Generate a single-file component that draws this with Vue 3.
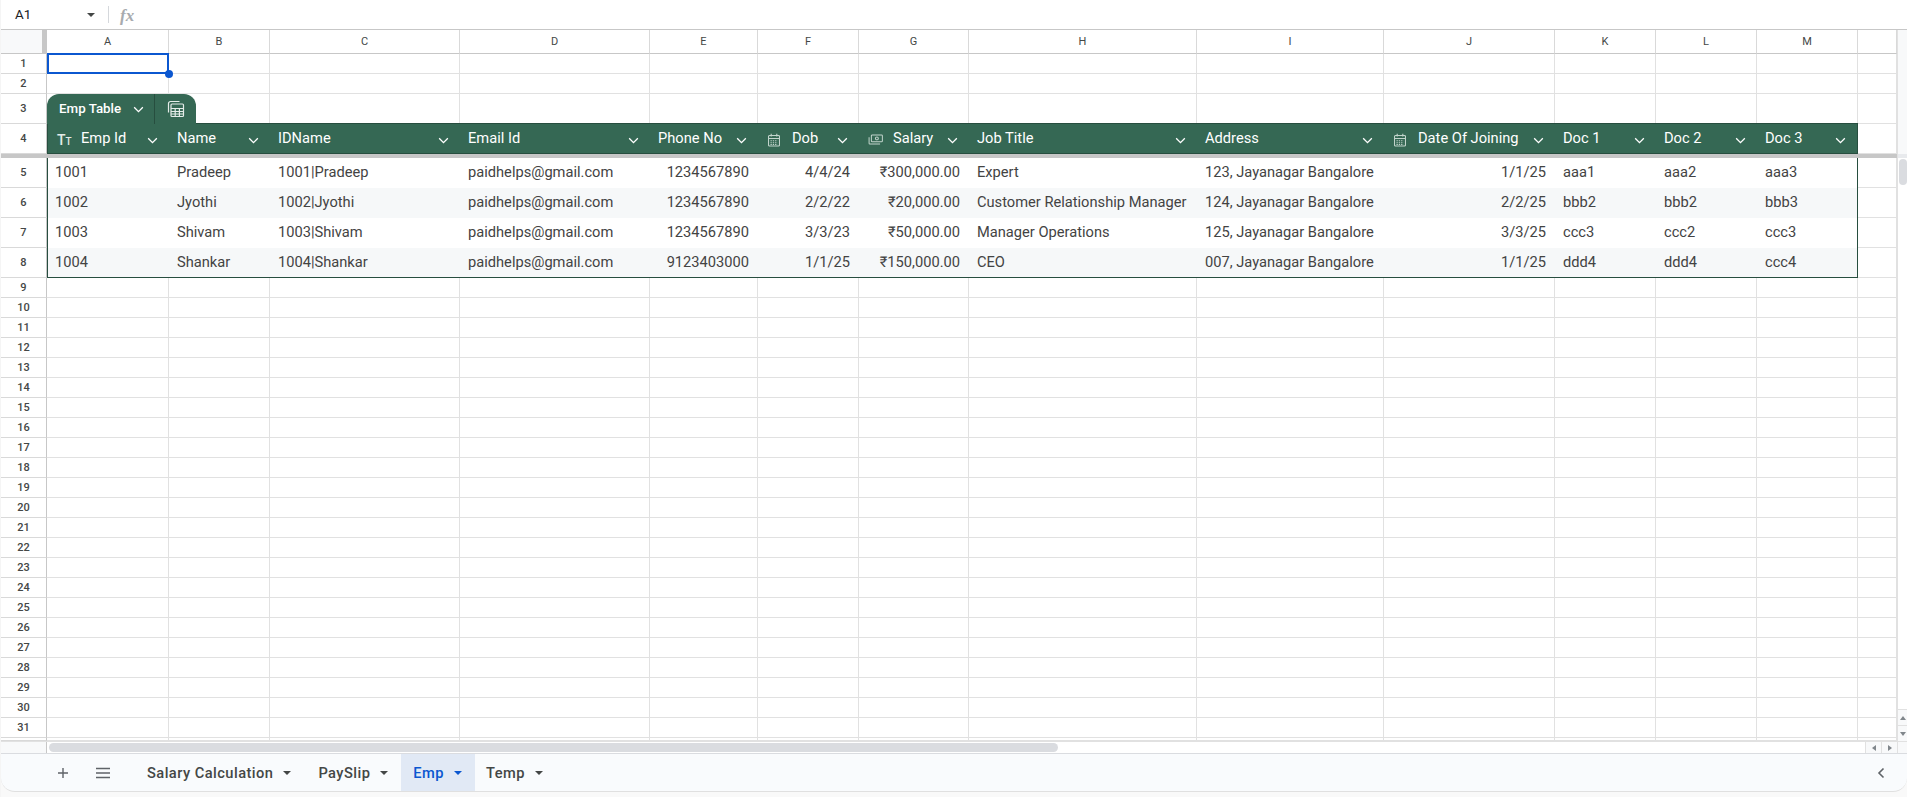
<script setup>
const columns = ['A', 'B', 'C', 'D', 'E', 'F', 'G', 'H', 'I', 'J', 'K', 'L', 'M', '']

const headers = [
  { label: 'Emp Id', icon: 'text' },
  { label: 'Name' },
  { label: 'IDName' },
  { label: 'Email Id' },
  { label: 'Phone No' },
  { label: 'Dob', icon: 'date' },
  { label: 'Salary', icon: 'money' },
  { label: 'Job Title' },
  { label: 'Address' },
  { label: 'Date Of Joining', icon: 'date' },
  { label: 'Doc 1' },
  { label: 'Doc 2' },
  { label: 'Doc 3' },
]

// which columns are right aligned
const rightCols = [4, 5, 6, 9]

const rows = [
  ['1001', 'Pradeep', '1001|Pradeep', 'paidhelps@gmail.com', '1234567890', '4/4/24', '₹300,000.00', 'Expert', '123, Jayanagar Bangalore', '1/1/25', 'aaa1', 'aaa2', 'aaa3'],
  ['1002', 'Jyothi', '1002|Jyothi', 'paidhelps@gmail.com', '1234567890', '2/2/22', '₹20,000.00', 'Customer Relationship Manager', '124, Jayanagar Bangalore', '2/2/25', 'bbb2', 'bbb2', 'bbb3'],
  ['1003', 'Shivam', '1003|Shivam', 'paidhelps@gmail.com', '1234567890', '3/3/23', '₹50,000.00', 'Manager Operations', '125, Jayanagar Bangalore', '3/3/25', 'ccc3', 'ccc2', 'ccc3'],
  ['1004', 'Shankar', '1004|Shankar', 'paidhelps@gmail.com', '9123403000', '1/1/25', '₹150,000.00', 'CEO', '007, Jayanagar Bangalore', '1/1/25', 'ddd4', 'ddd4', 'ccc4'],
]

// empty rows below the table
const emptyRows = []
for (let i = 9; i <= 31; i++) emptyRows.push(i)

const tabs = [
  { name: 'Salary Calculation' },
  { name: 'PaySlip' },
  { name: 'Emp', active: true },
  { name: 'Temp' },
]
</script>

<template>
  <div class="page">
    <!-- formula bar -->
    <div class="formula-bar">
      <span class="name-box">A1</span>
      <span class="caret"></span>
      <span class="bar-sep"></span>
      <span class="fx">fx</span>
    </div>

    <div class="sheet">
      <div class="sheet-main">
        <!-- column letters -->
        <div class="row col-head">
          <div class="corner"></div>
          <div v-for="c in columns" :key="c" class="letter">{{ c }}</div>
        </div>

        <!-- rows 1 and 2 -->
        <div class="row r20">
          <div class="num">1</div>
          <div v-for="c in columns" :key="c" class="cell">
            <div v-if="c === 'A'" class="selected"><span class="handle"></span></div>
          </div>
        </div>
        <div class="row r20">
          <div class="num">2</div>
          <div v-for="c in columns" :key="c" class="cell"></div>
        </div>

        <!-- row 3 holds the table name tab -->
        <div class="row r30">
          <div class="num">3</div>
          <div v-for="c in columns" :key="c" class="cell">
            <div v-if="c === 'A'" class="table-tab">
              <span class="tab-name">Emp Table</span>
              <svg class="chev" viewBox="0 0 12 12"><path d="M2 4l4 4 4-4" /></svg>
              <span class="tab-sep"></span>
              <svg class="tab-icon" viewBox="0 0 18 18">
                <path d="M1.5 12.5V3.5a2 2 0 0 1 2-2h9" />
                <rect x="4" y="4" width="12.5" height="12.5" rx="1" />
                <path d="M4 8.5h12.5M4 11.5h12.5M4 14h12.5M8.2 8.5v8M12.4 8.5v8" />
              </svg>
            </div>
          </div>
        </div>

        <!-- table header, row 4 -->
        <div class="row r30 head-row">
          <div class="num">4</div>
          <div v-for="h in headers" :key="h.label" class="th">
            <span v-if="h.icon === 'text'" class="tt">T<small>T</small></span>
            <svg v-if="h.icon === 'date'" class="th-icon" viewBox="0 0 12 14">
              <path d="M1.5 2.5h9a1 1 0 0 1 1 1v8.5a1 1 0 0 1-1 1h-9a1 1 0 0 1-1-1V3.5a1 1 0 0 1 1-1zM.5 5.5h11M3.2 .8v2.6M8.8 .8v2.6" />
              <path d="M2.5 7.7h7M2.5 9.7h7M2.5 11.5h7" stroke-dasharray="1.3 1" />
            </svg>
            <svg v-if="h.icon === 'money'" class="th-icon money" viewBox="0 0 16 12">
              <rect x="3.5" y="1" width="12" height="7.5" rx="1" />
              <path d="M1 3.5v6.5a.8.8 0 0 0 .8.8H13" />
              <circle cx="9.5" cy="4.8" r="1.6" />
            </svg>
            <span class="th-label">{{ h.label }}</span>
            <svg class="chev low" viewBox="0 0 12 12"><path d="M2 4l4 4 4-4" /></svg>
          </div>
          <div class="cell"></div>
        </div>

        <div class="freeze"></div>

        <!-- table body -->
        <div v-for="(r, i) in rows" :key="i" class="row r30" :class="{ 'last-row': i === rows.length - 1 }">
          <div class="num">{{ i + 5 }}</div>
          <div
            v-for="(v, j) in r"
            :key="j"
            class="td"
            :class="{ right: rightCols.includes(j), alt: i % 2 === 1, first: j === 0, end: j === r.length - 1 }"
          >{{ v }}</div>
          <div class="cell"></div>
        </div>

        <!-- the rest of the grid -->
        <div v-for="n in emptyRows" :key="n" class="row r20">
          <div class="num">{{ n }}</div>
          <div v-for="c in columns" :key="c" class="cell"></div>
        </div>
        <div class="row stub">
          <div class="num"></div>
          <div v-for="c in columns" :key="c" class="cell"></div>
        </div>

        <!-- horizontal scrollbar -->
        <div class="hscroll">
          <div class="hscroll-corner"></div>
          <div class="hscroll-track"><div class="hscroll-thumb"></div></div>
          <div class="arrow-btn"><span class="tri tri-left"></span></div>
          <div class="arrow-btn"><span class="tri tri-right"></span></div>
        </div>
      </div>

      <!-- vertical scrollbar -->
      <div class="vscroll">
        <div class="vscroll-top"></div>
        <div class="vscroll-band"></div>
        <div class="vscroll-track"><div class="vscroll-thumb"></div></div>
        <div class="arrow-btn v"><span class="tri tri-up"></span></div>
        <div class="arrow-btn v"><span class="tri tri-down"></span></div>
        <div class="vscroll-end"></div>
      </div>
    </div>

    <!-- sheet tabs -->
    <div class="tabbar">
      <svg class="bar-icon plus" viewBox="0 0 10 10"><path d="M5 0v10M0 5h10" /></svg>
      <svg class="bar-icon menu" viewBox="0 0 14 12"><path d="M0 1.5h14M0 6h14M0 10.5h14" /></svg>
      <div class="tabs">
        <div v-for="t in tabs" :key="t.name" class="tab" :class="{ active: t.active }">
          <span>{{ t.name }}</span>
          <span class="tab-caret"></span>
        </div>
      </div>
      <svg class="collapse" viewBox="0 0 10 12"><path d="M7.5 1.5L3 6l4.5 4.5" /></svg>
    </div>
  </div>
</template>

<style>
html, body {
  margin: 0;
  background: #f9f9f9;
}
</style>

<style scoped>
.page {
  width: 1907px;
  height: 797px;
  box-sizing: border-box;
  border-left: 1px solid #f5f5f5;
  overflow: hidden;
  font-family: Roboto, "Liberation Sans", sans-serif;
  display: flex;
  flex-direction: column;
  background: #f9f9f9;
}

.formula-bar {
  height: 30px;
  flex: none;
  box-sizing: border-box;
  background: #fff;
  border-bottom: 1px solid #c7c7c7;
  display: flex;
  align-items: center;
  padding-left: 14px;
}
.name-box {
  width: 72px;
  font-size: 13.33px;
  color: #202124;
}
.caret {
  border-left: 4px solid transparent;
  border-right: 4px solid transparent;
  border-top: 4px solid #444746;
}
.bar-sep {
  width: 1px;
  height: 17px;
  background: #d5d8dc;
  margin: 0 11px 0 13px;
}
.fx {
  font-family: "Liberation Serif", serif;
  font-style: italic;
  font-weight: 700;
  font-size: 17px;
  color: #a8abaf;
  padding-top: 2px;
}

.sheet {
  display: flex;
  height: 723px;
  flex: none;
  background: #fff;
  border-bottom: 1px solid #dadce0;
}
.sheet-main {
  width: 1896px;
  flex: none;
}

.row {
  display: grid;
  grid-template-columns: 46px 122px 101px 190px 190px 108px 101px 110px 228px 187px 171px 101px 101px 101px 39px;
}
.r20 { height: 20px; }
.r30 { height: 30px; }
.col-head { height: 24px; }
.stub { height: 3px; }

.corner {
  background: #f8f9fa;
  border-right: 5px solid #c7c7c7;
  border-bottom: 1px solid #c7c7c7;
  box-sizing: border-box;
}
.letter {
  background: #fff;
  box-sizing: border-box;
  border-right: 1px solid #d9d9d9;
  border-bottom: 1px solid #c7c7c7;
  text-align: center;
  font-size: 11px;
  line-height: 23px;
  color: #444746;
}
.num {
  background: #fff;
  box-sizing: border-box;
  border-right: 1px solid #c7c7c7;
  border-bottom: 1px solid #d9d9d9;
  padding-bottom: 1px;
  font-size: 11px;
  font-weight: 500;
  color: #444746;
  display: flex;
  align-items: center;
  justify-content: center;
}
.cell {
  position: relative;
  box-sizing: border-box;
  border-right: 1px solid #e1e1e1;
  border-bottom: 1px solid #e1e1e1;
  min-width: 0;
}

/* active cell outline */
.selected {
  position: absolute;
  left: 0;
  top: -1px;
  right: -1px;
  bottom: -1px;
  border: 2px solid #0b57d0;
  box-sizing: border-box;
}
.handle {
  position: absolute;
  right: -6px;
  bottom: -6px;
  width: 8px;
  height: 8px;
  border-radius: 50%;
  background: #0b57d0;
  z-index: 2;
}

/* table name tab */
.table-tab {
  position: absolute;
  left: 0;
  top: 0;
  height: 30px;
  width: 149px;
  box-sizing: border-box;
  background: #356854;
  border-radius: 12px 12px 0 0;
  color: #fff;
  display: flex;
  align-items: center;
  padding-left: 12px;
  z-index: 2;
}
.tab-name {
  font-size: 13.33px;
  font-weight: 500;
  width: 73px;
  padding-bottom: 2px;
}
.tab-sep {
  width: 1px;
  height: 30px;
  background: #274e3f;
  margin-left: 9px;
}
.tab-icon {
  width: 18px;
  height: 18px;
  margin-left: 12px;
  fill: none;
  stroke: #e4ece8;
  stroke-width: 1.2;
}
.chev {
  width: 13px;
  height: 13px;
  flex: none;
  fill: none;
  stroke: #fff;
  stroke-width: 1.2;
}
.chev.low { margin-top: 3px; }

/* table header */
.th {
  background: #356854;
  color: #fff;
  font-size: 14.67px;
  display: flex;
  align-items: center;
  padding: 0 10px 0 8px;
  margin-top: -1px;
  min-width: 0;
  box-sizing: border-box;
  border-top: 1px solid #274e3f;
  border-bottom: 1px solid #274e3f;
  position: relative;
  z-index: 1;
}
.th:nth-child(2) { border-left: 1px solid #274e3f; }
.th:nth-child(14) { border-right: 1px solid #274e3f; }
.th-label {
  flex: 1;
  white-space: nowrap;
  padding-bottom: 2px;
}
.tt {
  font-size: 14px;
  font-weight: 500;
  width: 24px;
  margin-left: 1px;
  flex: none;
  color: #e4ece8;
  padding-top: 2px;
}
.tt small {
  font-size: 10px;
}
.th-icon {
  width: 12px;
  height: 14px;
  flex: none;
  margin: 2px 12px 0 2px;
  fill: none;
  stroke: #c2d4cc;
  stroke-width: 1.1;
}
.th-icon.money {
  width: 15px;
  height: 11px;
  margin: 2px 10px 0 1px;
}

.freeze {
  height: 4px;
  background: #c7c7c7;
}

/* table body */
.td {
  font-size: 14.67px;
  color: #434343;
  line-height: 28px;
  padding: 0 8px;
  white-space: nowrap;
  overflow: hidden;
  background: #fff;
  min-width: 0;
}
.td.alt { background: #f6f8f9; }
.td.right { text-align: right; padding-right: 9px; }
.td.first { border-left: 1px solid #274e3f; padding-left: 7px; }
.td.end { border-right: 1px solid #274e3f; }
.last-row .td { border-bottom: 1px solid #274e3f; }

/* scrollbars */
.hscroll {
  display: flex;
  height: 12px;
  border-top: 1px solid #e1e1e1;
  box-sizing: border-box;
}
.hscroll-corner {
  width: 46px;
  background: #f8f9fa;
  border-right: 1px solid #c7c7c7;
  box-sizing: border-box;
}
.hscroll-track {
  flex: 1;
  padding: 1px 2px;
}
.hscroll-thumb {
  width: 1009px;
  height: 9px;
  background: #dadce0;
  border-radius: 5px;
}
.arrow-btn {
  width: 16px;
  display: flex;
  align-items: center;
  justify-content: center;
  background: #f8f9fa;
  border-left: 1px solid #e1e1e1;
  box-sizing: border-box;
}
.arrow-btn.v {
  width: 100%;
  height: 16px;
  flex: none;
  border-left: 0;
  border-top: 1px solid #e1e1e1;
}
.tri {
  width: 0;
  height: 0;
  border: 3px solid transparent;
}
.tri-left { border-right: 4px solid #80868b; border-left: 0; }
.tri-right { border-left: 4px solid #80868b; border-right: 0; }
.tri-up { border-bottom: 4px solid #80868b; border-top: 0; }
.tri-down { border-top: 4px solid #80868b; border-bottom: 0; }

.vscroll {
  width: 10px;
  flex: none;
  background: #fff;
  border-left: 1px solid #e1e1e1;
  box-sizing: border-box;
  display: flex;
  flex-direction: column;
}
.vscroll-top {
  height: 124px;
  flex: none;
  background: #f8f9fa;
}
.vscroll-band {
  height: 4px;
  flex: none;
  background: #e8eaed;
}
.vscroll-track {
  flex: 1;
  padding: 1px 0 0 1px;
}
.vscroll-thumb {
  height: 26px;
  width: 8px;
  background: #dadce0;
  border-radius: 4px;
}
.vscroll-end {
  height: 12px;
  flex: none;
  box-sizing: border-box;
  background: #f8f9fa;
  border-top: 1px solid #e1e1e1;
}

/* sheet tabs */
.tabbar {
  height: 38px;
  flex: none;
  box-sizing: border-box;
  background: #f9fbfd;
  border-bottom: 1px solid #e0e0e0;
  border-radius: 0 0 14px 14px;
  display: flex;
  align-items: center;
}
.bar-icon {
  flex: none;
  fill: none;
  stroke: #5f6368;
  stroke-width: 1.4;
}
.plus {
  width: 10px;
  height: 10px;
  margin-left: 57px;
}
.menu {
  width: 14px;
  height: 12px;
  margin-left: 28px;
}
.tabs {
  display: flex;
  height: 100%;
  margin-left: 25px;
}
.tab {
  display: flex;
  align-items: center;
  gap: 10px;
  padding: 0 13px;
  font-size: 14.67px;
  font-weight: 500;
  color: #444746;
  letter-spacing: 0.45px;
}
.tab:first-child { padding: 0 14px 0 12px; }
.tab:last-child { padding-left: 11px; }
.tab.active {
  background: #e1e9f5;
  color: #0b57d0;
  padding-left: 12px;
}
.tab-caret {
  border-left: 4px solid transparent;
  border-right: 4px solid transparent;
  border-top: 4px solid #444746;
}
.tab.active .tab-caret { border-top-color: #0b57d0; }
.collapse {
  width: 10px;
  height: 12px;
  margin-left: auto;
  margin-right: 21px;
  fill: none;
  stroke: #5f6368;
  stroke-width: 1.6;
}
</style>
